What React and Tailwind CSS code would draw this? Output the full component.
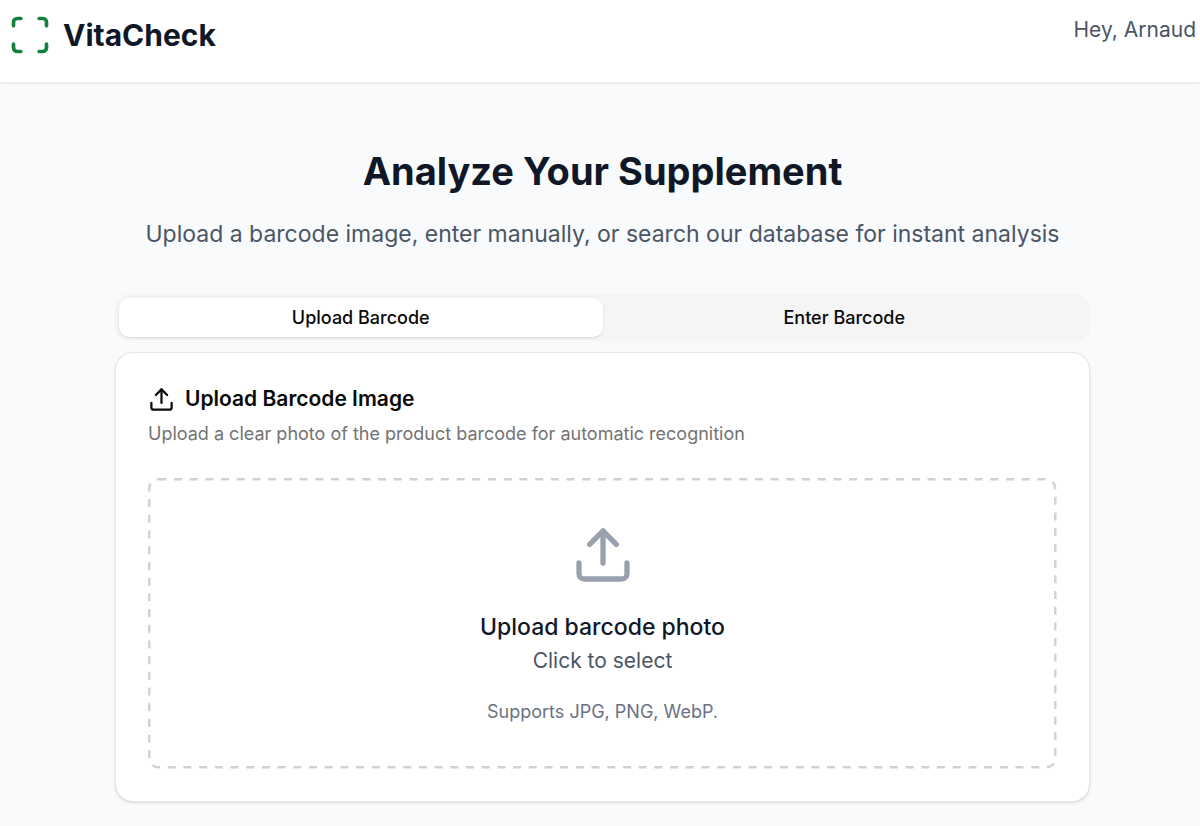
import { useRef, useState } from "react";
import { Scan, Upload } from "lucide-react";

const tabs = [
  { id: "upload", label: "Upload Barcode" },
  { id: "enter", label: "Enter Barcode" },
];

const Header = ({ name }) => (
  <header className="flex items-start justify-between h-[83px] pt-3 pl-2 pr-1 bg-white border-b border-gray-200 shadow-xs">
    <a href="#" className="flex items-center gap-[11px]">
      <Scan className="size-11 text-[#15803d]" />
      <span className="text-[30px] leading-[46px] font-bold text-gray-900">
        VitaCheck
      </span>
    </a>
    <p className="text-[21px] leading-9 text-gray-600">Hey, {name}</p>
  </header>
);

const UploadCard = () => {
  const inputRef = useRef(null);
  const [file, setFile] = useState(null);

  return (
    <section className="mt-[11px] p-8 bg-white border border-neutral-200 rounded-[18px] shadow-sm">
      <h2 className="flex items-center gap-2.5 text-[21px] leading-7 font-semibold text-neutral-950">
        <Upload className="size-[27px]" />
        Upload Barcode Image
      </h2>
      <p className="mt-[7px] text-[18px] leading-7 text-neutral-500">
        Upload a clear photo of the product barcode for automatic recognition
      </p>

      {/* Drop zone */}
      <button
        type="button"
        onClick={() => inputRef.current.click()}
        className="relative flex flex-col items-center w-full mt-[30px] pt-[45px] pb-[43px] rounded-[10px] cursor-pointer"
      >
        <svg className="absolute inset-0 size-full" fill="none" aria-hidden="true">
          <rect
            x="1.3"
            y="1.3"
            rx="9"
            className="w-[calc(100%-3px)] h-[calc(100%-3px)]"
            stroke="#d1d1d1"
            strokeWidth="2.4"
            strokeDasharray="8 7.7"
          />
        </svg>
        <Upload className="size-16 text-gray-400" />
        <span className="mt-[22px] text-[23px] leading-9 font-medium text-gray-900">
          Upload barcode photo
        </span>
        <span className="text-[21px] leading-8 text-gray-600">
          {file ? file.name : "Click to select"}
        </span>
        <span className="mt-[21px] text-[18px] leading-7 text-gray-500">
          Supports JPG, PNG, WebP.
        </span>
      </button>
      <input
        ref={inputRef}
        type="file"
        accept="image/*"
        aria-label="Barcode photo"
        onChange={(e) => setFile(e.target.files[0])}
        className="hidden"
      />
    </section>
  );
};

const App = () => {
  const [active, setActive] = useState("upload");

  return (
    <div className="min-h-screen bg-[#f9fafc] font-['Inter',sans-serif]">
      <Header name="Arnaud" />
      <main className="pl-[5px] pb-6">
        <div className="max-w-[975px] mx-auto">
          <h1 className="pt-16 text-center text-[38px] leading-12 font-bold text-gray-900">
            Analyze Your Supplement
          </h1>
          <p className="mt-[21px] text-center text-[23px] leading-9 text-gray-600">
            Upload a barcode image, enter manually, or search our database for
            instant analysis
          </p>

          {/* Tabs */}
          <div
            role="tablist"
            className="grid grid-cols-2 mt-[42px] p-1 h-[47px] bg-neutral-100 rounded-[14px]"
          >
            {tabs.map((tab) => (
              <button
                key={tab.id}
                type="button"
                role="tab"
                aria-selected={active === tab.id}
                onClick={() => setActive(tab.id)}
                className={`${
                  active === tab.id ? "bg-white shadow-sm" : ""
                } rounded-[10px] text-[18px] font-medium text-neutral-950`}
              >
                {tab.label}
              </button>
            ))}
          </div>

          <UploadCard />
        </div>
      </main>
    </div>
  );
};

export default App;
